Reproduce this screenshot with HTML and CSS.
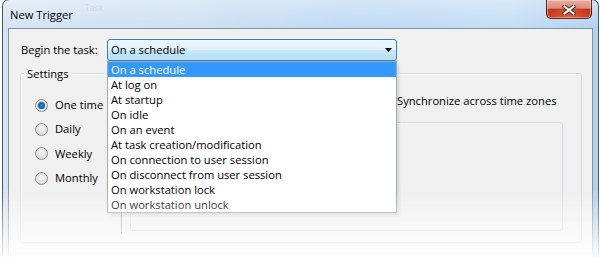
FILE: index.html
```html
<!DOCTYPE html>
<html lang="en">
<head>
    <meta charset="UTF-8">
    <title>New Trigger</title>
    <link rel="stylesheet" href="styles.css">
</head>
<body>
    <div class="window">
        <div class="titlebar">
            <span class="title">New Trigger</span>
            <span class="ghost">Task</span>
            <button class="close" aria-label="Close">
                <svg width="14" height="10" viewBox="0 0 14 10">
                    <path d="M2.5 1.5L11.5 8.5M11.5 1.5L2.5 8.5" stroke="#3b3030" stroke-width="4" stroke-linecap="square"/>
                    <path d="M2.5 1.5L11.5 8.5M11.5 1.5L2.5 8.5" stroke="#fff" stroke-width="2" stroke-linecap="square"/>
                </svg>
            </button>
        </div>

        <div class="client">
            <div class="task-row">
                <span class="task-label">Begin the task:</span>
                <div class="combo">
                    <span class="combo-value">On a schedule</span>
                    <svg class="combo-arrow" width="7" height="4" viewBox="0 0 7 4"><path d="M0 0H7L3.5 4Z" fill="#000"/></svg>

                    <ul class="dropdown">
                        <li class="selected">On a schedule</li>
                        <li>At log on</li>
                        <li>At startup</li>
                        <li>On idle</li>
                        <li>On an event</li>
                        <li>At task creation/modification</li>
                        <li>On connection to user session</li>
                        <li>On disconnect from user session</li>
                        <li>On workstation lock</li>
                        <li>On workstation unlock</li>
                    </ul>
                </div>
            </div>

            <fieldset class="settings">
                <legend>Settings</legend>
                <div class="settings-body">
                    <div class="freq">
                        <div class="radio-row"><span class="radio checked"></span><span>One time</span></div>
                        <div class="radio-row"><span class="radio"></span><span>Daily</span></div>
                        <div class="radio-row"><span class="radio"></span><span>Weekly</span></div>
                        <div class="radio-row"><span class="radio"></span><span>Monthly</span></div>
                    </div>
                    <div class="separator"></div>
                    <div class="detail">
                        <div class="start-row">
                            <div class="start-fields">
                                <span class="field date-field"></span>
                                <span class="field time-field"></span>
                            </div>
                            <span class="checkbox"></span>
                            <span class="sync-label">Synchronize across time zones</span>
                        </div>
                        <div class="inner-box"></div>
                    </div>
                </div>
            </fieldset>
        </div>
    </div>

    <div class="fade"></div>
</body>
</html>
```

FILE: styles.css
```css
html, body {
    margin: 0;
    padding: 0;
}

body {
    width: 600px;
    height: 257px;
    overflow: hidden;
    background: #fff;
    font-family: "Open Sans", "Noto Sans", sans-serif;
    font-size: 11.2px;
    color: #000;
}

/* window frame */
.window {
    margin: -1px 0 0 2px;
    width: 597px;
    height: 258px;
    box-sizing: border-box;
    border: 1px solid rgba(40, 52, 70, 0.8);
    border-bottom: none;
    border-radius: 7px 7px 0 0;
    background:
        linear-gradient(to bottom, rgba(255, 255, 255, 0.35), rgba(255, 255, 255, 0) 28px),
        linear-gradient(to right, #d6e4f2 0%, #cde0f2 30%, #bdd9f4 60%, #c4ddf4 85%, #b2d1f0 100%);
    display: flex;
    flex-direction: column;
}

.titlebar {
    height: 28px;
    flex: none;
    display: flex;
    align-items: flex-start;
    padding-left: 7px;
}

.title {
    margin-top: 7px;
    line-height: 16px;
    color: #000;
}

.ghost {
    margin: 2px 0 0 12px;
    font-size: 9px;
    line-height: 12px;
    color: rgba(90, 110, 130, 0.12);
    filter: blur(0.6px);
}

.close {
    margin: 0 6px 0 auto;
    width: 46px;
    height: 19px;
    padding: 0;
    border: 1px solid rgba(70, 24, 14, 0.85);
    border-top: none;
    border-radius: 0 0 5px 5px;
    background:
        radial-gradient(ellipse at 50% 100%, rgba(255, 110, 60, 0.6), rgba(255, 110, 60, 0) 60%),
        linear-gradient(to bottom, #eaae9f 0%, #dc8d79 45%, #c2391f 52%, #c94428 100%);
    box-shadow: inset 0 0 0 1px rgba(255, 255, 255, 0.35);
    display: flex;
    align-items: center;
    justify-content: center;
}

.close svg {
    display: block;
    margin-top: 1px;
}

/* client area */
.client {
    flex: 1;
    margin: 0 5px;
    border: 1px solid #8593a3;
    border-bottom: none;
    background: #f0f0f0;
}

.task-row {
    display: flex;
    align-items: center;
    margin: 10px 0 0 12px;
}

.task-label {
    width: 86px;
    line-height: 16px;
}

.combo {
    position: relative;
    width: 290px;
    height: 22px;
    box-sizing: border-box;
    border: 1px solid #3c7fb1;
    border-radius: 3px;
    background: linear-gradient(to bottom, #edf7fd 0%, #e0f2fc 50%, #c8e9fa 50%, #b4def6 100%);
    display: flex;
    align-items: center;
    padding-left: 3px;
}

.combo-value {
    line-height: 16px;
}

.combo-arrow {
    margin: 0 4px 0 auto;
}

.dropdown {
    position: absolute;
    top: 21px;
    left: -1px;
    z-index: 5;
    width: 290px;
    box-sizing: border-box;
    margin: 0;
    padding: 0;
    list-style: none;
    background: #fff;
    border: 1px solid #9ea9b5;
    box-shadow: 2px 2px 3px rgba(0, 0, 0, 0.12);
}

.dropdown li {
    height: 15px;
    line-height: 15px;
    padding-left: 3px;
    white-space: nowrap;
}

.dropdown li.selected {
    background: #3399ff;
    color: #fff;
}

/* settings group */
.settings {
    margin: 5px 10px 0 11px;
    padding: 0;
    min-width: 0;
    border: 1px solid #d5d9dd;
    border-radius: 3px;
    box-shadow: inset 1px 1px 0 #fff;
}

.settings legend {
    margin-left: 3px;
    padding: 0 3px;
    line-height: 15px;
}

.settings-body {
    display: flex;
    height: 161px;
}

.freq {
    width: 100px;
    padding-top: 12px;
}

.radio-row {
    display: flex;
    align-items: center;
    height: 24.3px;
    padding-left: 14px;
    line-height: 16px;
}

.radio {
    width: 13px;
    height: 13px;
    box-sizing: border-box;
    border: 1px solid #8e8f8f;
    border-radius: 50%;
    background: radial-gradient(circle at 50% 40%, #f6f6f6 0%, #e4e4e4 55%, #d2d2d2 100%);
    margin-right: 7px;
    flex: none;
}

.radio.checked {
    background: radial-gradient(circle at 50% 50%, #3c9be0 0, #1a5f9c 2.2px, #2c74b4 3.2px, #b8d7ee 4px, #eaeaea 4.8px, #d8d8d8 100%);
}

.separator {
    width: 1px;
    height: 144px;
    margin-top: 9px;
    background: #a3a3a3;
    border-right: 1px solid #fff;
}

.detail {
    flex: 1;
    min-width: 0;
}

.start-row {
    display: flex;
    align-items: center;
    margin-top: 12px;
    height: 16px;
    line-height: 16px;
    white-space: nowrap;
}

.start-fields {
    width: 258px;
    flex: none;
    display: flex;
    align-items: center;
    gap: 6px;
    padding-left: 40px;
    box-sizing: border-box;
}

.field {
    height: 14px;
    border: 1px solid #abadb3;
    background: #fff;
}

.date-field {
    width: 90px;
}

.time-field {
    width: 80px;
}

.checkbox {
    width: 13px;
    height: 13px;
    box-sizing: border-box;
    border: 1px solid #8e8f8f;
    background: linear-gradient(#e6e6e6, #fafafa);
    flex: none;
}

.sync-label {
    margin-left: 3px;
}

.inner-box {
    margin: 13px 18px 0 7px;
    height: 109px;
    box-sizing: border-box;
    border: 1px solid #d5d9dd;
    border-radius: 3px;
    box-shadow: inset 1px 1px 0 #fff;
}

/* bottom fade of the screenshot */
.fade {
    position: fixed;
    left: 0;
    top: 188px;
    width: 600px;
    height: 69px;
    z-index: 10;
    pointer-events: none;
    background: linear-gradient(to bottom, rgba(255, 255, 255, 0) 0%, rgba(255, 255, 255, 0.55) 60%, rgba(255, 255, 255, 0.92) 100%);
}
```
